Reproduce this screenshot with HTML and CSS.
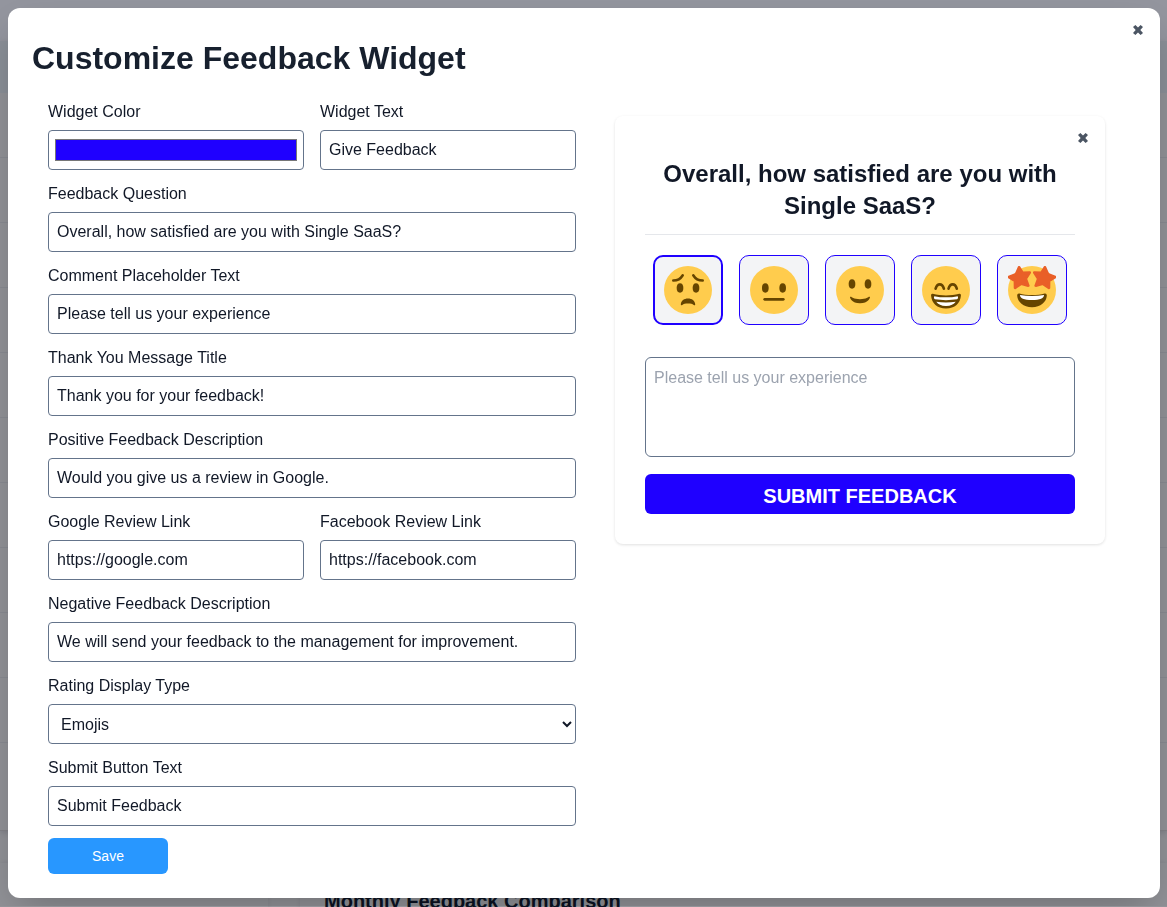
FILE: index.html
```html
<!DOCTYPE html>
<html lang="en">
<head>
<meta charset="utf-8">
<meta name="viewport" content="width=device-width, initial-scale=1">
<title>Customize Feedback Widget</title>
<link rel="stylesheet" href="styles.css">
</head>
<body>
<div class="page" aria-hidden="true">
  <div class="page-top"></div>
  <div class="list">
    <div class="list-head"></div>
    <div class="list-row"></div><div class="list-row"></div><div class="list-row"></div><div class="list-row"></div>
    <div class="list-row"></div><div class="list-row"></div><div class="list-row"></div><div class="list-row"></div>
    <div class="list-row"></div><div class="list-row"></div><div class="list-row"></div>
  </div>
  <div class="charts">
    <section class="chart"></section>
    <section class="chart"><h2 class="chart-title">Monthly Feedback Comparison</h2></section>
  </div>
</div>

<main class="modal" role="dialog" aria-labelledby="modal-title">
  <button class="close" type="button" aria-label="Close">
    <svg class="close-icon" viewBox="0 0 10 10"><path d="M2.400 0 5 2.400 7.600 0 10 2 7.300 5 10 8 7.600 10 5 7.600 2.400 10 0 8 2.700 5 0 2Z"/></svg>
  </button>
  <h1 class="title" id="modal-title">Customize Feedback Widget</h1>
  <div class="columns">
    <form class="form">
      <div class="pair">
        <div class="field"><label for="color">Widget Color</label><input class="control color" id="color" type="color" value="#1f00ff"></div>
        <div class="field"><label for="text">Widget Text</label><input class="control" id="text" type="text" value="Give Feedback"></div>
      </div>
      <div class="field"><label for="question">Feedback Question</label><input class="control" id="question" type="text" value="Overall, how satisfied are you with Single SaaS?"></div>
      <div class="field"><label for="placeholder">Comment Placeholder Text</label><input class="control" id="placeholder" type="text" value="Please tell us your experience"></div>
      <div class="field"><label for="thanks">Thank You Message Title</label><input class="control" id="thanks" type="text" value="Thank you for your feedback!"></div>
      <div class="field"><label for="positive">Positive Feedback Description</label><input class="control" id="positive" type="text" value="Would you give us a review in Google."></div>
      <div class="pair">
        <div class="field"><label for="google">Google Review Link</label><input class="control" id="google" type="text" value="https://google.com"></div>
        <div class="field"><label for="facebook">Facebook Review Link</label><input class="control" id="facebook" type="text" value="https://facebook.com"></div>
      </div>
      <div class="field"><label for="negative">Negative Feedback Description</label><input class="control" id="negative" type="text" value="We will send your feedback to the management for improvement."></div>
      <div class="field"><label for="rating">Rating Display Type</label><select class="control" id="rating"><option>Emojis</option></select></div>
      <div class="field"><label for="submit">Submit Button Text</label><input class="control" id="submit" type="text" value="Submit Feedback"></div>
      <button class="save" type="button">Save</button>
    </form>

    <section class="preview">
      <button class="close" type="button" aria-label="Close preview">
        <svg class="close-icon" viewBox="0 0 10 10"><path d="M2.400 0 5 2.400 7.600 0 10 2 7.300 5 10 8 7.600 10 5 7.600 2.400 10 0 8 2.700 5 0 2Z"/></svg>
      </button>
      <h2 class="question">Overall, how satisfied are you with Single SaaS?</h2>
      <div class="emojis">
        <button class="emoji selected" type="button" aria-label="Worried">
          <svg viewBox="0 0 36 36"><circle class="face" cx="18" cy="18" r="18"/><ellipse class="ink" cx="12" cy="16.500" rx="2.500" ry="3.500"/><ellipse class="ink" cx="24" cy="16.500" rx="2.500" ry="3.500"/><path class="line" d="M7 10.900c3.400 0 5.400-1.200 7-3.900M29 10.900c-3.400 0-5.400-1.200-7-3.900"/><path class="ink" d="M12.600 28.600C13 26 15 24.400 18 24.400s5 1.600 5.400 4.200c.1.800-.5 1-1.100.6-1-.7-2.300-1-4.300-1s-3.300.3-4.300 1c-.6.4-1.200.2-1.100-.6z"/></svg>
        </button>
        <button class="emoji" type="button" aria-label="Neutral">
          <svg viewBox="0 0 36 36"><circle class="face" cx="18" cy="18" r="18"/><ellipse class="ink" cx="11.500" cy="16.500" rx="2.500" ry="3.500"/><ellipse class="ink" cx="24.500" cy="16.500" rx="2.500" ry="3.500"/><path class="ink" d="M25 26H11a1 1 0 1 1 0-2h14a1 1 0 1 1 0 2z"/></svg>
        </button>
        <button class="emoji" type="button" aria-label="Smiling">
          <svg viewBox="0 0 36 36"><circle class="face" cx="18" cy="18" r="18"/><ellipse class="ink" cx="12" cy="13.500" rx="2.500" ry="3.500"/><ellipse class="ink" cx="24" cy="13.500" rx="2.500" ry="3.500"/><path class="ink" d="M10.515 23.621C10.560 23.800 11.683 28 18 28c6.318 0 7.440-4.200 7.485-4.379.055-.217-.043-.442-.237-.554-.195-.111-.439-.078-.6.077C24.629 23.163 22.694 25 18 25s-6.630-1.837-6.648-1.855C11.256 23.050 11.128 23 11 23c-.084 0-.169.021-.246.064-.196.112-.294.339-.239.557z"/></svg>
        </button>
        <button class="emoji" type="button" aria-label="Beaming">
          <svg viewBox="0 0 36 36"><circle class="face" cx="18" cy="18" r="18"/><path class="line" d="M10.200 17c.6-2 1.600-3.200 3.100-3.200s2.500 1.200 3.100 3.200M19.900 17c.6-2 1.600-3.200 3.100-3.200s2.500 1.200 3.100 3.200"/><path class="ink" d="M8.100 20.900c6.300 1.600 13.500 1.600 19.800 0 .8-.2 1.400.4 1.300 1.300C28.700 28.200 24.700 31.900 18 31.900S7.300 28.200 6.800 22.200c-.1-.9.500-1.500 1.300-1.300z"/><path class="teeth" d="M9.200 22.600c5.500 1.200 12.100 1.200 17.600 0 .5 1 .2 1.900-.5 2.400-5 .8-11.600.8-16.600 0-.7-.5-1-1.400-.5-2.400zM10.700 26.900c4.800.7 9.800.7 14.600 0C23.900 29 21.600 30 18 30s-5.900-1-7.300-3.100z"/></svg>
        </button>
        <button class="emoji" type="button" aria-label="Star-struck">
          <svg viewBox="0 0 36 36"><circle class="face" cx="18" cy="18" r="18"/><path class="star" d="M8.300 1 11 5.200 16.300 4.900 13.300 9.500 15.200 14.700 10 13.300 5.300 16.400 5.200 11.200.700 8.300 6 6.200ZM27.700 1 25 5.200 19.700 4.900 22.700 9.500 20.800 14.700 26 13.300 30.700 16.400 30.800 11.200 35.300 8.300 30 6.200Z"/><path class="ink" d="M18 21.800c-3.800 0-6.600-.5-9.500-1.200-.9-.2-1.700.4-1.600 1.800C7.200 27 11.500 31 18 31s10.800-4 11.100-8.600c.1-1.400-.7-2-1.600-1.800-2.900.7-5.700 1.200-9.500 1.200z"/><path class="teeth" d="M9 21.700c5.600 1 12.400 1 18 0 .2 2.300-3 3.800-9 3.800s-9.200-1.500-9-3.800z"/></svg>
        </button>
      </div>
      <textarea class="comment" aria-label="Comment" placeholder="Please tell us your experience"></textarea>
      <button class="submit" type="button">SUBMIT FEEDBACK</button>
    </section>
  </div>
</main>
</body>
</html>
```

FILE: styles.css
```css
*, *::before, *::after { box-sizing: border-box; }

body {
  margin: 0;
  padding: 8px 7px 8px 8px;
  color: #111827;
  font: 16px/24px "Liberation Sans", Arial, sans-serif;
}

button, input, select, textarea { font: inherit; color: inherit; margin: 0; }
h1, h2 { margin: 0; }

/* Dimmed page under the dialog */
.page {
  position: fixed;
  inset: 0;
  z-index: -1;
  overflow: hidden;
  background: #929398;
}
.page-top { height: 41px; background: #94969f; }
.list { border-bottom: 1px solid #838388; box-shadow: 0 2px 5px #82838a; }
.list-head { height: 52px; background: #8b9098; }
.list-row { height: 65px; border-bottom: 1px solid #898b92; }
.list-row:last-child { height: 87px; border: 0; }
.charts {
  display: grid;
  grid-template-columns: 268px 1fr;
  column-gap: 32px;
  margin-top: 32px;
}
.chart { height: 400px; padding: 24px; background: #929398; box-shadow: 0 0 4px #87888e; }
.chart-title { font-size: 20px; line-height: 28px; color: #0b1222; }

.modal {
  position: relative;
  max-width: 1152px;
  margin: 0 auto;
  padding: 24px;
  border-radius: 12px;
  background: #fff;
  box-shadow: 0 16px 40px -8px rgb(0 0 0 / 25%);
}
.title { font-size: 32px; line-height: 52px; color: #17202e; }

.close {
  position: absolute;
  top: 12px;
  right: 12px;
  display: grid;
  place-items: center;
  width: 20px;
  height: 20px;
  padding: 0;
  border: 0;
  background: none;
}
.close-icon { width: 10px; height: 10px; fill: #4b5563; }

.columns { display: grid; grid-template-columns: 1fr 1fr; align-items: start; }
.form { display: grid; gap: 12px; padding: 16px 8px 0 16px; }
.pair { display: grid; grid-template-columns: 1fr 1fr; gap: 16px; }
.field { display: grid; gap: 6px; min-width: 0; }
.control {
  width: 100%;
  height: 40px;
  padding: 0 8px;
  border: 1px solid #64748b;
  border-radius: 4px;
  background-color: #fff;
}
select.control { padding: 0 0 0 8px; }
.color { padding: 4px; }
.save {
  width: 120px;
  height: 36px;
  padding: 0;
  border: 0;
  border-radius: 6px;
  background: #2897ff;
  color: #fff;
  font-size: 14px;
}

.preview {
  position: relative;
  justify-self: center;
  display: grid;
  width: 100%;
  max-width: 490px;
  margin-top: 32px;
  padding: 42px 30px 30px;
  border-radius: 8px;
  box-shadow: 0 1px 3px rgb(0 0 0 / 12%);
}
.question {
  padding-bottom: 12px;
  border-bottom: 1px solid #e5e7eb;
  font-size: 24px;
  line-height: 32px;
  text-align: center;
}
.emojis { display: flex; justify-content: center; gap: 16px; margin: 20px 0 32px; }
.emoji {
  display: grid;
  place-items: center;
  width: 70px;
  height: 70px;
  padding: 0;
  border: 1px solid #1f00ff;
  border-radius: 10px;
  background: #f3f4f6;
}
.emoji svg { width: 48px; height: 48px; }
.selected { border-width: 2px; }
.face { fill: #ffcc4d; }
.ink { fill: #664500; }
.line { fill: none; stroke: #664500; stroke-width: 2; stroke-linecap: round; }
.teeth { fill: #fff; }
.star { fill: #e95f28; stroke: #e95f28; stroke-width: 2; stroke-linejoin: round; }
.comment {
  width: 100%;
  height: 100px;
  padding: 8px;
  border: 1px solid #64748b;
  border-radius: 6px;
  resize: none;
}
.comment::placeholder { color: #9ca3af; }
.submit {
  height: 40px;
  margin-top: 17px;
  padding: 4px 0 0;
  border: 0;
  border-radius: 6px;
  background: #1f00ff;
  color: #fff;
  font-size: 20px;
  font-weight: 700;
}
```
